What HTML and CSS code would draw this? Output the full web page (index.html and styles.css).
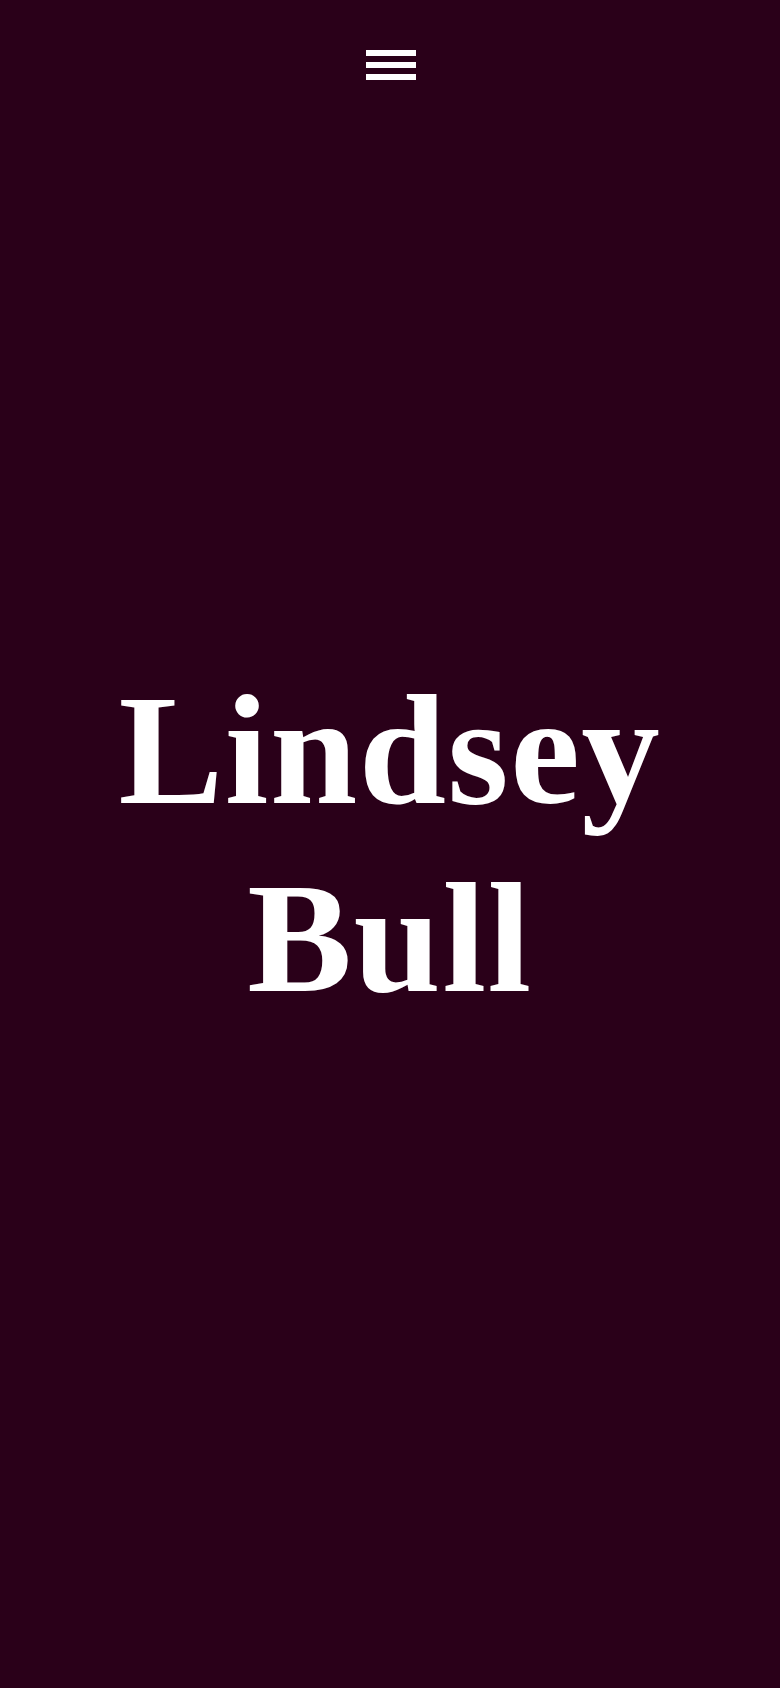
FILE: index.html
```html
<!DOCTYPE html>
<html lang="en">
<head>
<meta charset="utf-8">
<title>Lindsey Bull</title>
<link rel="stylesheet" href="styles.css">
</head>
<body>
<header class="site-header">
  <button class="menu-toggle" aria-label="Menu">
    <span class="bar"></span>
    <span class="bar"></span>
    <span class="bar"></span>
  </button>
</header>
<main class="hero">
  <h1 class="title">Lindsey Bull</h1>
</main>
</body>
</html>
```
FILE: styles.css
```css
html, body {
  margin: 0;
  padding: 0;
  background: #2a0019;
}
body {
  min-height: 100vh;
  font-family: "Liberation Serif", "Times New Roman", serif;
  color: #ffffff;
}
.site-header {
  position: absolute;
  top: 50px;
  left: 0;
  right: 0;
  display: flex;
  justify-content: center;
  padding-left: 2px;
}
.menu-toggle {
  display: flex;
  flex-direction: column;
  gap: 6px;
  padding: 0;
  margin: 0;
  border: 0;
  background: transparent;
  cursor: pointer;
}
.bar {
  display: block;
  width: 50px;
  height: 6px;
  background: #ffffff;
}
.hero {
  height: 100vh;
  display: flex;
  align-items: center;
  justify-content: center;
}
.title {
  margin: 0;
  width: 560px;
  text-align: center;
  font-size: 157px;
  line-height: 188px;
  font-weight: 700;
  letter-spacing: 1.5px;
}
```
